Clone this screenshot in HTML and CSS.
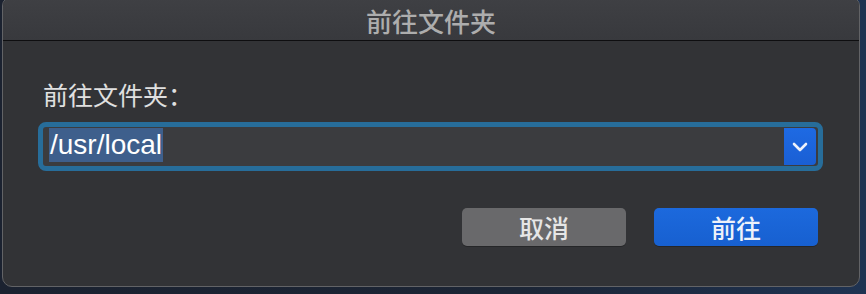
FILE: index.html
```html
<!DOCTYPE html>
<html lang="zh-CN">
<head>
<meta charset="utf-8">
<title>前往文件夹</title>
<link rel="stylesheet" href="styles.css">
</head>
<body>
<div class="window">
  <div class="titlebar">前往文件夹</div>
  <div class="content">
    <div class="label">前往文件夹：</div>
    <div class="field">
      <div class="field-text"><span class="sel">/usr/local</span></div>
      <div class="drop">
        <svg width="16" height="10" viewBox="0 0 16 10"><path d="M2 2 L8 8 L14 2" fill="none" stroke="#eef2fb" stroke-width="2.6" stroke-linecap="round" stroke-linejoin="round"/></svg>
      </div>
    </div>
    <div class="buttons">
      <div class="btn cancel">取消</div>
      <div class="btn go">前往</div>
    </div>
  </div>
</div>
</body>
</html>
```
FILE: styles.css
```css
html, body {
  margin: 0;
  padding: 0;
}
body {
  width: 866px;
  height: 294px;
  overflow: hidden;
  background: linear-gradient(90deg, #1b2230 0%, #1c2535 60%, #1f3352 100%);
  font-family: "Noto Sans CJK SC", "Noto Sans", sans-serif;
}
.window {
  margin: -4px 0 0 2px;
  width: 856px;
  height: 289px;
  border: 1px solid #626366;
  border-radius: 10px;
  background: #323336;
  overflow: hidden;
  box-sizing: content-box;
}
.titlebar {
  height: 43px;
  line-height: 47px;
  text-align: center;
  font-size: 26px;
  font-weight: 500;
  color: #adadad;
  background: linear-gradient(#3f4044, #38393d);
  border-bottom: 1px solid #0e0e10;
}
.content {
  display: flex;
  flex-direction: column;
  padding: 0 36px 0 35px;
}
.label {
  margin: 40px 0 0 5px;
  font-size: 25px;
  line-height: 26px;
  color: #e0e0e0;
}
.field {
  margin-top: 15px;
  height: 39px;
  border: 5px solid #276d9a;
  border-radius: 8px;
  background: #3b3c3f;
  display: flex;
  align-items: stretch;
}
.field-text {
  flex: 1;
  padding: 1px 0 0 6px;
  font-family: "Liberation Sans", Arial, sans-serif;
  font-size: 28px;
  line-height: 34px;
  color: #ffffff;
}
.sel {
  display: inline-block;
  background: #3e5f8c;
  padding: 0 1px;
}
.drop {
  width: 32px;
  margin: 1px 2px 1px 0;
  border-radius: 0 4px 4px 0;
  background: linear-gradient(#1e6ae3, #1a5fd4);
  display: flex;
  align-items: center;
  justify-content: center;
}
.buttons {
  margin-top: 37px;
  display: flex;
  justify-content: flex-end;
  gap: 28px;
  padding-right: 5px;
}
.btn {
  width: 164px;
  height: 38px;
  border-radius: 5px;
  font-size: 25px;
  font-weight: 500;
  line-height: 38px;
  text-align: center;
  color: #e6e6e6;
}
.cancel {
  background: #69696b;
  box-shadow: 0 1px 0 rgba(0,0,0,0.25);
}
.go {
  background: linear-gradient(#1c69dd, #1760d0);
  color: #eef2fa;
  box-shadow: 0 1px 0 rgba(0,0,0,0.25);
}
```
